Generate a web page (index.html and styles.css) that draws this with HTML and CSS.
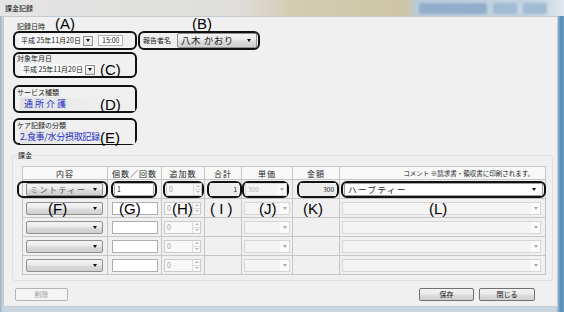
FILE: index.html
```html
<!DOCTYPE html>
<html lang="ja">
<head>
    <meta charset="UTF-8">
    <title>課金記録</title>
    <link rel="stylesheet" href="styles.css">
</head>
<body>
<div class="window">
    <div class="titlebar">
        <span class="title">課金記録</span>
        <div class="ghost">
            <span class="ghost-btn wide"></span>
            <span class="ghost-btn"></span>
            <span class="ghost-btn"></span>
        </div>
    </div>

    <div class="client">
        <div class="top">
            <div class="label-row">
                <span class="small rec-label">記録日時</span>
                <span class="mark">(A)</span>
                <span class="mark mark-b">(B)</span>
            </div>
            <div class="row-ab">
                <div class="callout box-a">
                    <div class="datepick">
                        <span class="date-text">平成 25年11月20日</span>
                        <span class="dd-btn"><i class="arrow"></i></span>
                    </div>
                    <div class="timebox">15:00</div>
                </div>
                <div class="callout box-b">
                    <span class="small name-label">報告者名</span>
                    <div class="combo combo-name"><span>八木 かおり</span><i class="arrow"></i></div>
                </div>
            </div>

            <div class="callout box-c">
                <div class="small">対象年月日</div>
                <div class="inline">
                    <div class="datepick">
                        <span class="date-text">平成 25年11月20日</span>
                        <span class="dd-btn"><i class="arrow"></i></span>
                    </div>
                    <span class="mark">(C)</span>
                </div>
            </div>

            <div class="callout box-d">
                <div class="small">サービス種類</div>
                <div class="inline field">
                    <span class="blue blue-d">通所介護</span>
                    <span class="mark">(D)</span>
                </div>
            </div>

            <div class="callout box-e">
                <div class="small">ケア記録の分類</div>
                <div class="inline field">
                    <span class="blue blue-e">2.食事/水分摂取記録</span>
                    <span class="mark">(E)</span>
                </div>
            </div>
        </div>

        <div class="group">
            <span class="legend">課金</span>
            <table class="charges">
                <colgroup>
                    <col style="width:85px"><col style="width:54px"><col style="width:43px">
                    <col style="width:37px"><col style="width:51px"><col style="width:47px"><col style="width:206px">
                </colgroup>
                <tr>
                    <th>内容</th>
                    <th>個数／回数</th>
                    <th>追加数</th>
                    <th>合計</th>
                    <th>単価</th>
                    <th>金額</th>
                    <th class="th-comment">コメント ※請求書・領収書に印刷されます。</th>
                </tr>
                <tr>
                    <td><div class="callout ring ring-f"><div class="combo row-combo"><span>ミントティー</span><i class="arrow"></i></div></div></td>
                    <td><div class="callout ring ring-g"><div class="textbox">1</div></div></td>
                    <td><div class="callout ring ring-h"><div class="spin"><span class="spin-val">0</span><span class="spin-btns"><i class="up"></i><i class="down"></i></span></div></div></td>
                    <td><div class="callout ring ring-i"><div class="readonly">1</div></div></td>
                    <td><div class="callout ring ring-j"><div class="dis-combo"><span>300</span><span class="dis-btn"><i class="arrow grey"></i></span></div></div></td>
                    <td><div class="callout ring ring-k"><div class="readonly">300</div></div></td>
                    <td><div class="callout ring ring-l"><div class="combo white-combo"><span>ハーブティー</span><i class="arrow"></i></div></div></td>
                </tr>
                <tr>
                    <td><div class="combo row-combo plain"><i class="arrow"></i></div><span class="mark over m-f">(F)</span></td>
                    <td><div class="textbox plain-input"></div><span class="mark over m-g">(G)</span></td>
                    <td><div class="spin plain-spin"><span class="spin-val">0</span><span class="spin-btns"><i class="up"></i><i class="down"></i></span></div><span class="mark over m-h">(H)</span></td>
                    <td><span class="mark over m-i">(&nbsp;I&nbsp;)</span></td>
                    <td><div class="dis-combo plain-price"><span></span><span class="dis-btn"><i class="arrow grey"></i></span></div><span class="mark over m-j">(J)</span></td>
                    <td><span class="mark over m-k">(K)</span></td>
                    <td><div class="dis-combo plain-comment"><span></span><span class="dis-btn"><i class="arrow grey"></i></span></div><span class="mark over m-l">(L)</span></td>
                </tr>
                <tr>
                    <td><div class="combo row-combo plain"><i class="arrow"></i></div></td>
                    <td><div class="textbox plain-input"></div></td>
                    <td><div class="spin plain-spin"><span class="spin-val">0</span><span class="spin-btns"><i class="up"></i><i class="down"></i></span></div></td>
                    <td></td>
                    <td><div class="dis-combo plain-price"><span></span><span class="dis-btn"><i class="arrow grey"></i></span></div></td>
                    <td></td>
                    <td><div class="dis-combo plain-comment"><span></span><span class="dis-btn"><i class="arrow grey"></i></span></div></td>
                </tr>
                <tr>
                    <td><div class="combo row-combo plain"><i class="arrow"></i></div></td>
                    <td><div class="textbox plain-input"></div></td>
                    <td><div class="spin plain-spin"><span class="spin-val">0</span><span class="spin-btns"><i class="up"></i><i class="down"></i></span></div></td>
                    <td></td>
                    <td><div class="dis-combo plain-price"><span></span><span class="dis-btn"><i class="arrow grey"></i></span></div></td>
                    <td></td>
                    <td><div class="dis-combo plain-comment"><span></span><span class="dis-btn"><i class="arrow grey"></i></span></div></td>
                </tr>
                <tr>
                    <td><div class="combo row-combo plain"><i class="arrow"></i></div></td>
                    <td><div class="textbox plain-input"></div></td>
                    <td><div class="spin plain-spin"><span class="spin-val">0</span><span class="spin-btns"><i class="up"></i><i class="down"></i></span></div></td>
                    <td></td>
                    <td><div class="dis-combo plain-price"><span></span><span class="dis-btn"><i class="arrow grey"></i></span></div></td>
                    <td></td>
                    <td><div class="dis-combo plain-comment"><span></span><span class="dis-btn"><i class="arrow grey"></i></span></div></td>
                </tr>
            </table>
        </div>

        <div class="buttons">
            <div class="btn disabled btn-del">削除</div>
            <div class="btn btn-save">保存</div>
            <div class="btn btn-close">閉じる</div>
        </div>
    </div>
</div>
</body>
</html>
```

FILE: styles.css
```css
* {
    box-sizing: border-box;
}
body {
    margin: 0;
    width: 564px;
    height: 312px;
    overflow: hidden;
    font-family: "Noto Sans CJK JP", "Noto Sans", sans-serif;
    color: #1a1a1a;
    background: #a9bccb;
}
.window {
    width: 564px;
    height: 312px;
    display: flex;
    flex-direction: column;
    background: linear-gradient(90deg, #9fb2c3 0, #c9d6df 3px, #c9d6df 556px, #8fb5d4 558px, #4f88b6 561px, #6e9fc6 564px);
}
.titlebar {
    height: 16px;
    flex: none;
    display: flex;
    align-items: center;
    padding-left: 5px;
    background: linear-gradient(90deg, #e3e4e4 0%, #dfdedb 42%, #d3ccb2 52%, #cec5a6 72%, #b8cbdb 74%, #c5d5e3 96%, #e2e9ef 100%);
}
.title {
    font-size: 7px;
    line-height: 9px;
    color: #111;
}
.ghost {
    margin-left: auto;
    margin-right: 17px;
    display: flex;
    gap: 6px;
    height: 11px;
    filter: blur(1.2px);
}
.ghost-btn {
    width: 24px;
    background: #a3bcd3;
    border-radius: 2px;
}
.ghost-btn.wide {
    width: 68px;
    background: #93aecb;
}

/* client area */
.client {
    flex: 1;
    margin: 0 6px 5px 3px;
    background: #f0f0f0;
    border: 1px solid #c3cbd2;
    padding-top: 3px;
    display: flex;
    flex-direction: column;
}
.top {
    margin-left: 9px;
    width: 248px;
}
.small {
    font-size: 7px;
    line-height: 9px;
    white-space: nowrap;
}
.mark {
    font-family: "Liberation Sans", Arial, sans-serif;
    font-size: 15px;
    line-height: 15px;
    color: #000;
    white-space: nowrap;
}
.label-row {
    display: flex;
    align-items: flex-end;
    height: 11px;
}
.rec-label {
    width: 42px;
    padding-left: 4px;
}
.mark-b {
    margin-left: 117px;
}
.callout {
    border: 2px solid #111;
    border-radius: 6px;
}
.row-ab {
    display: flex;
    gap: 1px;
}
.box-a {
    width: 124px;
    height: 19px;
    display: flex;
    align-items: center;
    padding-left: 4px;
}
.box-b {
    width: 122px;
    height: 19px;
    display: flex;
    align-items: center;
    padding-left: 3px;
}
.name-label {
    width: 31px;
}
.datepick {
    display: flex;
    align-items: center;
    width: 75px;
    height: 12px;
    background: #f7f7f7;
    padding-left: 2px;
}
.date-text {
    font-size: 7px;
    line-height: 9px;
    white-space: nowrap;
}
.dd-btn {
    margin-left: auto;
    margin-right: 1px;
    width: 10px;
    height: 10px;
    border: 1px solid #8c8c8c;
    background: linear-gradient(#fafafa, #e2e2e2);
    display: flex;
    align-items: center;
    justify-content: center;
}
.timebox {
    margin-left: 4px;
    width: 25px;
    height: 11px;
    border: 1px solid #b0b0b0;
    background: #fff;
    font-size: 7px;
    line-height: 9px;
    padding-left: 3px;
}
.arrow {
    display: block;
    width: 0;
    height: 0;
    border-left: 2.5px solid transparent;
    border-right: 2.5px solid transparent;
    border-top: 3px solid #111;
}
.arrow.grey {
    border-top-color: #a8a8a8;
}
.combo {
    display: flex;
    align-items: center;
    border: 1px solid #8e8f8f;
    border-radius: 2px;
    background: linear-gradient(#f4f4f4, #eaeaea 48%, #dcdcdc 52%, #cfcfcf);
    padding: 0 5px 0 3px;
    white-space: nowrap;
}
.combo .arrow {
    margin-left: auto;
}
.combo-name {
    margin-left: 3px;
    width: 80px;
    height: 15px;
    font-size: 9.5px;
    letter-spacing: 0.5px;
    line-height: 13px;
    color: #222;
}
.box-c {
    margin-top: 2px;
    width: 124px;
    height: 26px;
    padding-left: 2px;
}
.inline {
    display: flex;
    align-items: center;
    height: 13px;
    margin-left: 4px;
}
.inline .mark {
    margin-left: 4px;
    line-height: 13px;
}
.box-d {
    margin-top: 7px;
    width: 124px;
    height: 28px;
    padding: 1px 0 0 2px;
}
.box-e {
    margin-top: 5px;
    width: 124px;
    height: 27px;
    padding: 1px 0 0 2px;
}
.field {
    height: 14px;
    margin-left: 3px;
    background: linear-gradient(90deg, #e4e4e4, #eeeeee 70%, #f0f0f0);
}
.field .mark {
    margin-left: 0;
}
.blue {
    display: block;
    width: 80px;
    color: #1f2fc4;
    font-size: 9px;
    line-height: 12px;
    white-space: nowrap;
}
.blue-d {
    padding-left: 4px;
    letter-spacing: 2px;
}
.blue-e {
    letter-spacing: -0.3px;
}

/* charge group */
.group {
    position: relative;
    margin: 10px 4px 0 8px;
    border: 1px solid #dfe2e4;
    border-radius: 3px;
    padding: 10px 0 5px 9px;
}
.legend {
    position: absolute;
    top: -5px;
    left: 4px;
    padding: 0 1px;
    background: #f0f0f0;
    font-size: 7px;
    line-height: 9px;
}
.charges {
    border-collapse: collapse;
    table-layout: fixed;
    width: 523px;
}
.charges th {
    height: 13px;
    padding: 0;
    border: 1px solid #c6c6c6;
    background: #f8f8f8;
    font-size: 8px;
    font-weight: normal;
    letter-spacing: 1px;
    line-height: 11px;
    color: #222;
}
.charges th.th-comment {
    text-align: right;
    padding-right: 11px;
    font-size: 6.5px;
    letter-spacing: 0;
}
.charges td {
    position: relative;
    height: 19px;
    padding: 0;
    border: 1px solid #c6c6c6;
    vertical-align: middle;
}
.ring {
    height: 17px;
    display: flex;
    align-items: center;
}
.ring-f {
    margin-left: -6px;
    width: 91px;
    padding-left: 7px;
}
.ring-g {
    margin-left: 3px;
    width: 46px;
    padding: 0 1px;
}
.ring-h {
    margin-left: 1px;
    width: 41px;
    padding-left: 1px;
}
.ring-i {
    margin-left: 2px;
    width: 35px;
    padding: 0 1px;
}
.ring-j {
    width: 47px;
    padding-left: 1px;
}
.ring-k {
    margin-left: 4px;
    width: 42px;
    padding: 0 1px;
}
.ring-l {
    margin-left: 1px;
    width: 205px;
    padding: 0 1px;
}
.row-combo {
    width: 77px;
    height: 13px;
    font-size: 8px;
    line-height: 11px;
    letter-spacing: 1.5px;
    color: #555;
}
.row-combo.plain {
    margin-left: 3px;
}
.white-combo {
    width: 100%;
    height: 13px;
    background: #fff;
    border-color: #a0a0a0;
    font-size: 8.5px;
    line-height: 11px;
    letter-spacing: 1.5px;
    padding-right: 6px;
}
.textbox {
    width: 100%;
    height: 13px;
    border: 1px solid #abadb3;
    background: #fff;
    font-size: 7px;
    line-height: 11px;
    padding-left: 2px;
}
.plain-input {
    margin-left: 4px;
    width: 46px;
}
.spin {
    display: flex;
    width: 36px;
    height: 13px;
    border: 1px solid #cbcbcb;
    background: #f8f8f8;
}
.plain-spin {
    margin-left: 2px;
    width: 37px;
}
.spin-val {
    flex: 1;
    font-size: 7px;
    line-height: 11px;
    padding-left: 2px;
    color: #a0a0a0;
}
.spin-btns {
    width: 8px;
    display: flex;
    flex-direction: column;
    border-left: 1px solid #dcdcdc;
}
.spin-btns i {
    flex: 1;
    display: flex;
    align-items: center;
    justify-content: center;
}
.spin-btns .up {
    border-bottom: 1px solid #dcdcdc;
}
.spin-btns .up::after,
.spin-btns .down::after {
    content: "";
    border-left: 2px solid transparent;
    border-right: 2px solid transparent;
}
.spin-btns .up::after {
    border-bottom: 2px solid #b8b8b8;
}
.spin-btns .down::after {
    border-top: 2px solid #b8b8b8;
}
.readonly {
    width: 100%;
    height: 13px;
    background: #ececec;
    text-align: right;
    padding-right: 2px;
    font-size: 6.5px;
    line-height: 12px;
}
.dis-combo {
    display: flex;
    align-items: center;
    width: 100%;
    height: 13px;
    border: 1px solid #d6d6d6;
    background: #f4f4f4;
    font-size: 6.5px;
    line-height: 11px;
    color: #b0b0b0;
    padding-left: 2px;
}
.dis-btn {
    margin-left: auto;
    width: 9px;
    height: 11px;
    background: #fbfbfb;
    display: flex;
    align-items: center;
    justify-content: center;
}
.plain-price {
    margin-left: 2px;
    width: 46px;
}
.plain-comment {
    margin-left: 2px;
    width: 199px;
}
.over {
    position: absolute;
    top: 2px;
}
.m-f { left: 25px; }
.m-g { left: 11px; }
.m-h { left: 10px; }
.m-i { left: 5px; }
.m-j { left: 17px; }
.m-k { left: 10px; }
.m-l { left: 89px; }

/* bottom buttons */
.buttons {
    display: flex;
    margin-top: 7px;
    padding-right: 22px;
}
.btn {
    height: 13px;
    border: 1px solid #707070;
    border-radius: 2px;
    background: linear-gradient(#f3f3f3, #ebebeb 48%, #dddddd 52%, #cfcfcf);
    font-size: 7px;
    line-height: 11px;
    text-align: center;
    color: #111;
}
.btn.disabled {
    border-color: #b0b4b7;
    background: #f4f4f4;
    color: #9c9c9c;
}
.btn-del {
    margin-left: 11px;
    width: 53px;
}
.btn-save {
    margin-left: auto;
    width: 55px;
}
.btn-close {
    margin-left: 5px;
    width: 56px;
}
```
